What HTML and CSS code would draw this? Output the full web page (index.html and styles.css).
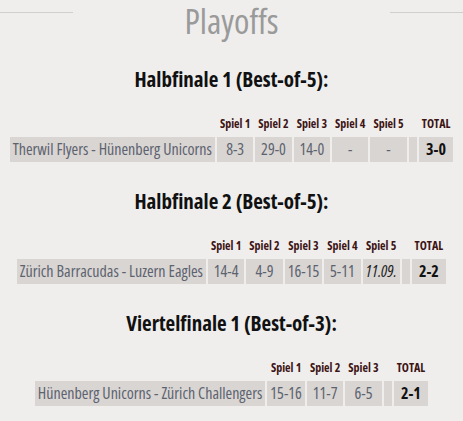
FILE: index.html
```html
<!DOCTYPE html>
<html>
<head>
<meta charset="utf-8">
<link rel="stylesheet" href="styles.css">
</head>
<body>
<div class="page">
  <div class="title-row">
    <span class="rule"></span>
    <h1 class="title">Playoffs</h1>
    <span class="rule"></span>
  </div>

  <section class="series">
    <h2 class="series-title">Halbfinale 1 (Best-of-5):</h2>
    <table class="games">
      <tr class="head">
        <th></th><th>Spiel 1</th><th>Spiel 2</th><th>Spiel 3</th><th>Spiel 4</th><th>Spiel 5</th><th class="gap"></th><th>TOTAL</th>
      </tr>
      <tr class="row">
        <td class="teams">Therwil Flyers - Hünenberg Unicorns</td><td>8-3</td><td>29-0</td><td>14-0</td><td>-</td><td>-</td><td class="gap"></td><td class="total">3-0</td>
      </tr>
    </table>
  </section>

  <section class="series">
    <h2 class="series-title">Halbfinale 2 (Best-of-5):</h2>
    <table class="games">
      <tr class="head">
        <th></th><th>Spiel 1</th><th>Spiel 2</th><th>Spiel 3</th><th>Spiel 4</th><th>Spiel 5</th><th class="gap"></th><th>TOTAL</th>
      </tr>
      <tr class="row">
        <td class="teams">Zürich Barracudas - Luzern Eagles</td><td>14-4</td><td>4-9</td><td>16-15</td><td>5-11</td><td class="date">11.09.</td><td class="gap"></td><td class="total">2-2</td>
      </tr>
    </table>
  </section>

  <section class="series">
    <h2 class="series-title">Viertelfinale 1 (Best-of-3):</h2>
    <table class="games">
      <tr class="head">
        <th></th><th>Spiel 1</th><th>Spiel 2</th><th>Spiel 3</th><th class="gap"></th><th>TOTAL</th>
      </tr>
      <tr class="row">
        <td class="teams">Hünenberg Unicorns - Zürich Challengers</td><td>15-16</td><td>11-7</td><td>6-5</td><td class="gap"></td><td class="total">2-1</td>
      </tr>
    </table>
  </section>
</div>
</body>
</html>
```

FILE: styles.css
```css
html, body {
  margin: 0;
  padding: 0;
}
body {
  background: #efeeed;
  font-family: "Open Sans", sans-serif;
  font-stretch: 75%;
  width: 463px;
  height: 421px;
  overflow: hidden;
}
.page {
  display: flex;
  flex-direction: column;
  align-items: center;
}
.title-row {
  width: 100%;
  display: flex;
  align-items: flex-start;
  justify-content: space-between;
  height: 56px;
}
.rule {
  display: block;
  width: 73px;
  height: 1px;
  margin-top: 12px;
  background: #cfcfcf;
}
.title {
  margin: 2px 0 0 0;
  padding: 0 4px;
  font-size: 35px;
  font-weight: normal;
  color: #9a9a9a;
  line-height: 38px;
  white-space: nowrap;
}
.series {
  display: flex;
  flex-direction: column;
  align-items: center;
  height: 122px;
}
.series-title {
  margin: 11px 0 0 0;
  font-family: "Open Sans", sans-serif;
  font-stretch: 80%;
  font-size: 21px;
  line-height: 24px;
  font-weight: bold;
  color: #111;
  white-space: nowrap;
}
.games {
  margin-top: 24px;
  border-collapse: separate;
  border-spacing: 2px;
  white-space: nowrap;
}
.head th {
  font-size: 12px;
  font-weight: bold;
  color: #3d1414;
  padding: 0 3px;
  height: 18px;
  line-height: 14px;
  vertical-align: top;
}
.row td {
  background: #d9d5d2;
  color: #5c6370;
  font-size: 16px;
  height: 25px;
  padding: 0 3px;
  text-align: center;
  line-height: 25px;
}
.gap {
  padding: 0 4px !important;
}
.row td.total {
  color: #111;
  font-weight: bold;
}
.row td.date {
  font-style: italic;
  color: #222;
}
```
